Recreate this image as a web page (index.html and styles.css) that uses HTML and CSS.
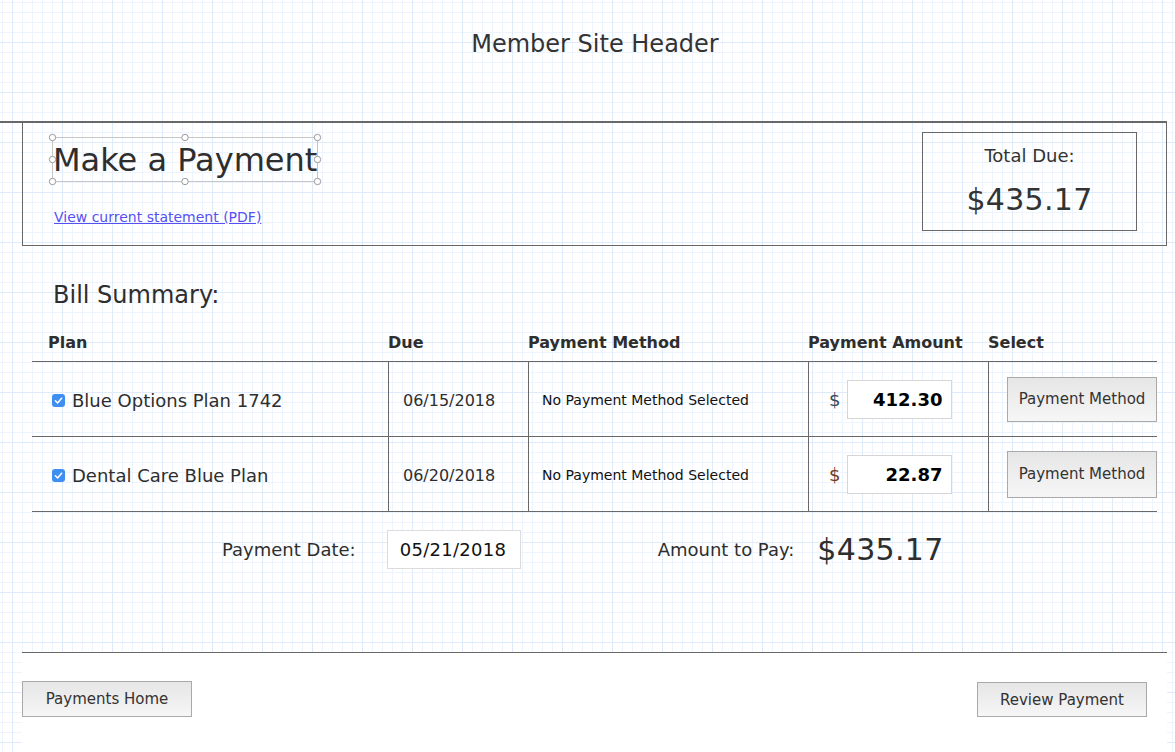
FILE: index.html
```html
<!DOCTYPE html>
<html lang="en">
<head>
<meta charset="utf-8">
<title>Make a Payment</title>
<link rel="stylesheet" href="styles.css">
</head>
<body>
<header class="site-header">Member Site Header</header>

<section class="pay-panel">
  <div class="pay-intro">
    <h1 class="pay-title">Make a Payment<svg class="handles" width="274" height="53" viewBox="0 0 274 53"><rect x="4.5" y="4.5" width="265" height="44" fill="none" stroke="#c6c6c6" stroke-width="1"/><g fill="#fff" stroke="#9a9a9a" stroke-width="1"><circle cx="4.5" cy="4.5" r="3.2"/><circle cx="137" cy="4.5" r="3.2"/><circle cx="269.5" cy="4.5" r="3.2"/><circle cx="4.5" cy="26.5" r="3.2"/><circle cx="269.5" cy="26.5" r="3.2"/><circle cx="4.5" cy="48.5" r="3.2"/><circle cx="137" cy="48.5" r="3.2"/><circle cx="269.5" cy="48.5" r="3.2"/></g></svg></h1>
    <a class="statement-link" href="#">View current statement (PDF)</a>
  </div>
  <div class="total-box">
    <div class="total-label">Total Due:</div>
    <div class="total-value">$435.17</div>
  </div>
</section>

<section class="bill">
  <h2 class="bill-title">Bill Summary:</h2>
  <div class="bill-table">
    <div class="bill-row bill-head">
      <div class="hcell hcell-plan">Plan</div>
      <div class="hcell">Due</div>
      <div class="hcell">Payment Method</div>
      <div class="hcell">Payment Amount</div>
      <div class="hcell">Select</div>
    </div>
    <div class="bill-row bill-body">
      <div class="cell cell-plan"><span class="check"><svg width="13" height="13" viewBox="0 0 13 13"><rect width="13" height="13" rx="3" fill="#3f8ff2"/><path d="M3.4 6.8 L5.6 9 L9.6 4.2" fill="none" stroke="#fff" stroke-width="1.5" stroke-linecap="round" stroke-linejoin="round"/></svg></span>Blue Options Plan 1742</div>
      <div class="cell cell-due">06/15/2018</div>
      <div class="cell cell-method">No Payment Method Selected</div>
      <div class="cell cell-amount"><span class="dollar">$</span><span class="amount-input">412.30</span></div>
      <div class="cell cell-select"><button class="btn btn-method">Payment Method</button></div>
    </div>
    <div class="bill-row bill-body bill-last">
      <div class="cell cell-plan"><span class="check"><svg width="13" height="13" viewBox="0 0 13 13"><rect width="13" height="13" rx="3" fill="#3f8ff2"/><path d="M3.4 6.8 L5.6 9 L9.6 4.2" fill="none" stroke="#fff" stroke-width="1.5" stroke-linecap="round" stroke-linejoin="round"/></svg></span>Dental Care Blue Plan</div>
      <div class="cell cell-due">06/20/2018</div>
      <div class="cell cell-method">No Payment Method Selected</div>
      <div class="cell cell-amount"><span class="dollar dollar-alt">$</span><span class="amount-input">22.87</span></div>
      <div class="cell cell-select"><button class="btn btn-method btn-tall">Payment Method</button></div>
    </div>
  </div>

  <div class="pay-row">
    <span class="pay-label">Payment Date:</span>
    <span class="date-input">05/21/2018</span>
    <span class="pay-label pay-label-amount">Amount to Pay:</span>
    <span class="pay-total">$435.17</span>
  </div>
</section>

<footer class="page-footer">
  <button class="btn btn-foot">Payments Home</button>
  <button class="btn btn-foot btn-review">Review Payment</button>
</footer>
</body>
</html>
```

FILE: styles.css
```css
html, body {
  margin: 0;
  padding: 0;
}

body {
  min-height: 100vh;
  display: flex;
  flex-direction: column;
  font-family: "DejaVu Sans", Verdana, sans-serif;
  color: #333;
  background-color: #fff;
  background-image:
    linear-gradient(to right, #dfeafb 1px, transparent 1px),
    linear-gradient(to bottom, #dfeafb 1px, transparent 1px),
    linear-gradient(to right, #eef4fd 1px, transparent 1px),
    linear-gradient(to bottom, #eef4fd 1px, transparent 1px);
  background-size: 50px 50px, 50px 50px, 10px 10px, 10px 10px;
  background-position: 12px 42px, 12px 42px, 2px 2px, 2px 2px;
}

/* Header */
.site-header {
  box-sizing: border-box;
  width: 1167px;
  height: 123px;
  border-bottom: 2px solid #686868;
  padding: 30px 0 0 23px;
  font-size: 24px;
  line-height: 29px;
  text-align: center;
  color: #333;
}

/* Top panel */
.pay-panel {
  box-sizing: border-box;
  width: 1145px;
  height: 123px;
  margin-left: 22px;
  border: 1px solid #686868;
  border-top: none;
  padding: 9px 29px 0 29px;
  display: flex;
  justify-content: space-between;
  align-items: flex-start;
}

.pay-intro {
  display: flex;
  flex-direction: column;
  align-items: flex-start;
  margin-top: 5px;
}

.pay-title {
  position: relative;
  margin: 0;
  padding-left: 1px;
  width: 265px;
  height: 45px;
  font-size: 32px;
  line-height: 47px;
  font-weight: normal;
  color: #2e2e2e;
  white-space: nowrap;
}

.handles {
  position: absolute;
  left: -4px;
  top: -4px;
  overflow: visible;
  pointer-events: none;
}

.statement-link {
  margin-top: 27px;
  margin-left: 2px;
  font-size: 14px;
  line-height: 17px;
  color: #5650f0;
  text-decoration: underline;
}

.total-box {
  box-sizing: border-box;
  width: 215px;
  height: 99px;
  border: 1px solid #686868;
  padding-top: 12px;
  text-align: center;
}

.total-label {
  font-size: 18px;
  line-height: 22px;
}

.total-value {
  margin-top: 15px;
  font-size: 30px;
  line-height: 36px;
  letter-spacing: 0.3px;
}

/* Bill summary */
.bill {
  display: flex;
  flex-direction: column;
}

.bill-title {
  margin: 35px 0 0 53px;
  font-size: 24px;
  line-height: 29px;
  font-weight: normal;
  color: #2e2e2e;
}

.bill-table {
  margin: 23px 0 0 32px;
  width: 1125px;
  display: flex;
  flex-direction: column;
}

.bill-row {
  display: grid;
  grid-template-columns: 356px 140px 280px 180px 169px;
}

.hcell {
  font-size: 16px;
  line-height: 19px;
  font-weight: bold;
  padding-bottom: 9px;
  color: #2e2e2e;
}

.hcell-plan {
  padding-left: 16px;
}

.bill-body {
  box-sizing: border-box;
  height: 75px;
  border-top: 1px solid #686868;
}

.bill-last {
  height: 76px;
  border-bottom: 1px solid #686868;
}

.cell {
  display: flex;
  align-items: center;
  box-sizing: border-box;
  border-left: 1px solid #686868;
}

.cell-plan {
  border-left: none;
  padding: 3px 0 0 20px;
  font-size: 18px;
  color: #2e2e2e;
}

.check {
  display: inline-flex;
  width: 13px;
  height: 13px;
  margin-right: 7px;
}

.cell-due {
  padding: 2px 0 0 14px;
  font-size: 16px;
  color: #2e2e2e;
}

.cell-method {
  padding: 1px 0 0 13px;
  font-size: 14px;
  color: #111;
}

.cell-amount {
  padding-left: 20px;
}

.dollar {
  font-size: 18px;
  color: #33495e;
  margin-right: 7px;
}

.dollar-alt {
  color: #6e3a24;
}

.amount-input {
  box-sizing: border-box;
  width: 105px;
  height: 39px;
  border: 1px solid #d6d6d6;
  background: #fff;
  padding-right: 9px;
  display: flex;
  align-items: center;
  justify-content: flex-end;
  font-size: 18px;
  font-weight: bold;
  color: #000;
}

.cell-select {
  padding-left: 18px;
}

.btn {
  box-sizing: border-box;
  font-family: "DejaVu Sans", Verdana, sans-serif;
  font-size: 15px;
  color: #333;
  border: 1px solid #a9a9a9;
  border-radius: 0;
  background: linear-gradient(to bottom, #e6e6e6, #f6f6f6);
  padding: 0;
  cursor: pointer;
}

.btn-method {
  width: 150px;
  height: 45px;
}

.btn-tall {
  height: 47px;
}

/* Payment date row */
.pay-row {
  display: flex;
  align-items: center;
  height: 39px;
  margin-top: 18px;
  padding-left: 222px;
}

.pay-label {
  font-size: 18px;
  color: #2e2e2e;
  margin-right: 31px;
}

.pay-label-amount {
  margin-left: 137px;
  margin-right: 23px;
}

.date-input {
  box-sizing: border-box;
  width: 134px;
  height: 39px;
  border: 1px solid #dcdcdc;
  background: #fff;
  padding-left: 12px;
  display: flex;
  align-items: center;
  font-size: 18px;
  letter-spacing: 0.3px;
  color: #111;
}

.pay-total {
  font-size: 30px;
  letter-spacing: 0.3px;
  color: #2e2e2e;
}

/* Footer */
.page-footer {
  box-sizing: border-box;
  margin-top: auto;
  margin-left: 22px;
  width: 1145px;
  height: 100px;
  border-top: 1px solid #686868;
  background: #fff;
  padding: 28px 20px 0 0;
  display: flex;
  justify-content: space-between;
  align-items: flex-start;
}

.btn-foot {
  width: 170px;
  height: 36px;
}

.btn-review {
  margin-top: 1px;
  height: 35px;
}
```
